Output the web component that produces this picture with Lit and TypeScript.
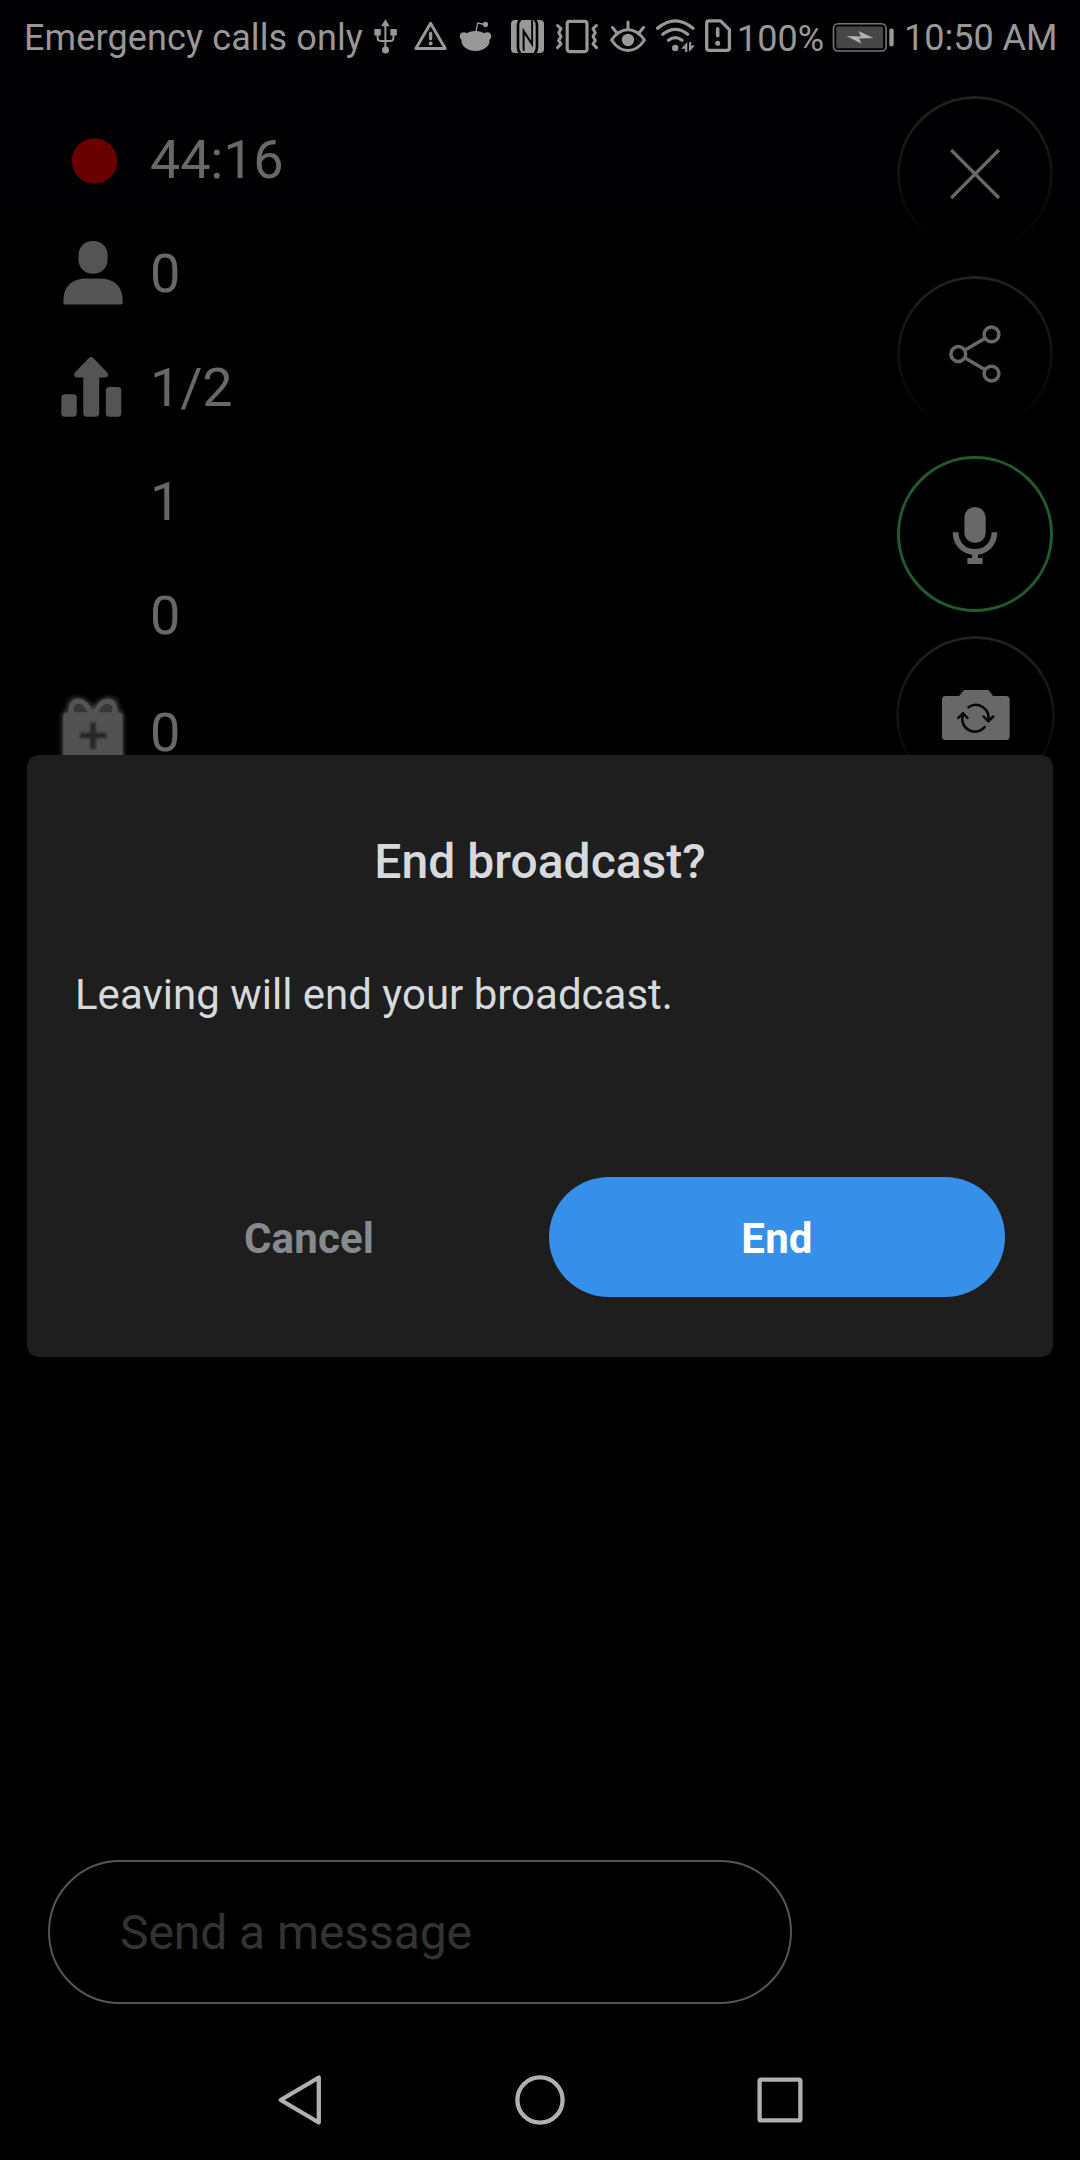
import { LitElement, html, css, svg } from "lit";
import { customElement, property } from "lit/decorators.js";

/* Each glyph owns a view box; the drawing coordinates are screen units. */
const glyphs: Record<string, { box: [number, number, number, number]; art: unknown }> = {
  usb: {
    box: [372, 0, 28, 76],
    art: svg`
      <path d="M385.4 19.3l4.3 7h-8.6z M382 50a3.5 3.5 0 1 0 7 0a3.5 3.5 0 1 0-7 0z M374.4 29h6.4v6.6h-6.4z M390.400 29h6.400v6.600h-6.400z" fill="currentColor"/>
      <path d="M385.4 25v24 M377.6 34v3.5q0 3.6 3.6 3.6h8.6q3.6 0 3.6-3.6V34" fill="none" stroke="currentColor" stroke-width="2"/>`,
  },
  warning: {
    box: [412, 0, 37, 76],
    art: svg`
      <path d="M430.6 23.3L445.2 48.4H415.9z" fill="none" stroke="currentColor" stroke-width="3" stroke-linejoin="round"/>
      <path d="M430.6 33.4v5.4" stroke="currentColor" stroke-width="3.4" stroke-linecap="round"/>
      <circle cx="430.6" cy="43.6" r="2" fill="currentColor"/>`,
  },
  reddit: {
    box: [458, 0, 35, 76],
    art: svg`
      <ellipse cx="475.5" cy="41" rx="14" ry="10" fill="currentColor"/>
      <circle cx="463.8" cy="36.3" r="4" fill="currentColor"/>
      <circle cx="487.2" cy="36.3" r="4" fill="currentColor"/>
      <circle cx="485.5" cy="24.4" r="2.6" fill="currentColor"/>
      <path d="M476 32l1.7-9 7 1.5" fill="none" stroke="currentColor" stroke-width="1.3"/>`,
  },
  nfc: {
    box: [510, 0, 35, 76],
    art: svg`
      <rect x="511" y="20" width="33" height="33" rx="4" fill="currentColor"/>
      <g fill="none" stroke="#010002">
        <path d="M520.500 19.500Q518 21.500 518 26V47Q518 51.500 520.500 53.500" stroke-width="2.600"/>
        <path d="M534.500 19.500Q537 21.500 537 26V47Q537 51.500 534.500 53.500" stroke-width="2.600"/>
      </g>
      <path d="M522.600 27.500L531.200 41V20H533V47.500L524.600 34.500V51.500L522.600 50z" fill="#010002"/>`,
  },
  vibrate: {
    box: [555, 0, 44, 76],
    art: svg`
      <rect x="567.2" y="21.400" width="19.800" height="30.200" rx="2.500" fill="none" stroke="currentColor" stroke-width="3.200"/>
      <path d="M557.5 25.500l3.500 3.200-2.300 4 2.300 3.700-2.300 4 2.300 3.600-3.500 3.600M596.500 25.500l-3.500 3.200 2.300 4-2.300 3.700 2.300 4-2.300 3.600 3.500 3.600" fill="none" stroke="currentColor" stroke-width="3" stroke-linejoin="round" stroke-linecap="round"/>`,
  },
  eye: {
    box: [609, 0, 39, 76],
    art: svg`
      <path d="M611.5 40Q618.500 29.700 628 29.700T644.500 40Q637.500 50.500 628 50.500T611.500 40z" fill="none" stroke="currentColor" stroke-width="3" stroke-linejoin="round"/>
      <circle cx="628" cy="40" r="6.200" fill="currentColor"/>
      <path d="M628 22v7M612.500 27.500l4.500 5.500M643.500 27.500l-4.500 5.500" stroke="currentColor" stroke-width="3" stroke-linecap="round"/>`,
  },
  wifi: {
    box: [655, 0, 42, 76],
    art: svg`
      <g fill="none" stroke="currentColor" stroke-width="3.300" stroke-linecap="round">
        <path d="M657.500 28.300Q675.300 13.500 693 28.300M662.800 34.300Q675.300 24.500 687.700 34.300M668.500 40.300Q675.300 35 682 40.300"/>
      </g>
      <circle cx="675.200" cy="48" r="3.200" fill="currentColor"/>
      <path d="M687.300 42v10h-2.200v-3.200h-4zM689 52V42h2v3.500h4z" fill="currentColor"/>`,
  },
  sim: {
    box: [704, 0, 28, 76],
    art: svg`
      <path d="M709 20.800H720.500L729.400 29.700V48Q729.400 50.300 727 50.300H709Q706.700 50.300 706.700 48V23Q706.700 20.800 709 20.800z" fill="none" stroke="currentColor" stroke-width="3.300" stroke-linejoin="round"/>
      <path d="M717.700 28.800v7" stroke="currentColor" stroke-width="3.600" stroke-linecap="round"/>
      <circle cx="717.700" cy="43.200" r="2.500" fill="currentColor"/>`,
  },
  battery: {
    box: [832, 0, 63, 76],
    art: svg`
      <rect x="833.500" y="23.800" width="52.600" height="27.200" rx="4.500" fill="none" stroke="#777" stroke-width="1.600"/>
      <rect x="836.300" y="26.500" width="46.800" height="21.800" rx="1.500" fill="#464646"/>
      <path d="M846.500 36L861 36.500 858.500 31 873.500 38 859 38.500 861.500 43.700z" fill="#b4b4b4"/>
      <rect x="889.300" y="28.600" width="4.400" height="18" rx="2" fill="currentColor"/>`,
  },
  record: { box: [56, 102, 76, 114], art: svg`<circle cx="94.500" cy="161" r="22.800" fill="#680000"/>` },
  person: {
    box: [56, 216, 76, 114],
    art: svg`
      <path d="M78.500 255.500C78.500 246.500 84.500 241 93 241S107.600 246.500 107.600 255.500V259.500C107.600 268 101.500 273.700 93 273.700S78.500 268 78.500 259.500z" fill="#545454"/>
      <path d="M63.300 302Q63.300 278.500 87 278.500H99Q122.800 278.500 122.800 302Q122.800 304.600 120 304.600H66Q63.300 304.600 63.300 302z" fill="#545454"/>`,
  },
  ranking: {
    box: [56, 330, 76, 114],
    art: svg`
      <g fill="#545454">
        <rect x="61.300" y="394.200" width="15.500" height="22.600" rx="3.500"/>
        <rect x="105.800" y="387" width="15.500" height="29.800" rx="3.500"/>
        <path d="M88.800 358Q91 356 93.200 358L107.500 372.700Q109 375 107.500 376.500Q107 377.600 104.500 377.600H99.200V413.300Q99.200 416.800 95.700 416.800H86.800Q83.300 416.800 83.300 413.300V377.600H77.500Q75 377.600 74.800 376.500Q73.500 375 74.800 372.700z"/>
      </g>`,
  },
  gift: {
    box: [50, 675, 88, 114],
    art: svg`
      <defs>
        <filter id="halo" x="-30%" y="-30%" width="160%" height="160%"><feGaussianBlur stdDeviation="2.600"/></filter>
        <filter id="soft" filterUnits="userSpaceOnUse" x="70" y="715" width="46" height="42"><feGaussianBlur stdDeviation="0.9"/></filter>
      </defs>
      <g filter="url(#halo)" fill="#555" opacity=".9">
        <rect x="62.300" y="711.500" width="61" height="60" rx="4"/>
        <path d="M68 714Q65 697.500 78 697.500Q86 697.500 93 708Q100 697.500 108 697.500Q121 697.500 118 714z"/>
      </g>
      <g fill="#373737" stroke="#545454" stroke-width="5" stroke-linejoin="round">
        <path d="M72.500 715C69 707 73 701.300 79 701.300C85 701.300 87 707 92.500 715z"/>
        <path d="M113.500 715C117 707 113 701.300 107 701.300C101 701.300 99 707 93.500 715z"/>
      </g>
      <rect x="63.300" y="712.600" width="59.200" height="58" rx="4" fill="#525252"/>
      <path d="M93 722.500v26.500M80 735.600h26.500" stroke="#262626" stroke-width="5.500" filter="url(#soft)"/>`,
  },
  close: {
    box: [897, 96, 156, 156],
    art: svg`<path d="M951.200 150L999 198M999 150L951.200 198" stroke="currentColor" stroke-width="3.200"/>`,
  },
  share: {
    box: [897, 276, 156, 156],
    art: svg`
      <g fill="none" stroke="currentColor" stroke-width="3.500">
        <circle cx="958.300" cy="354" r="7.400"/><circle cx="991.500" cy="334.400" r="7.400"/><circle cx="991.500" cy="373.600" r="7.400"/>
        <path d="M964.700 350.200L985.100 338.200M964.700 357.800L985.100 369.800"/>
      </g>`,
  },
  mic: {
    box: [897, 456, 156, 156],
    art: svg`
      <rect x="964.400" y="507" width="21.300" height="36" rx="10.600" fill="currentColor"/>
      <path d="M955.600 532.300C955.600 544 964 552 975 552S994.400 544 994.400 532.300" fill="none" stroke="currentColor" stroke-width="5.800"/>
      <path d="M972 553h6v5h4.600v6h-15.200v-6h4.600z" fill="currentColor"/>`,
  },
  camera: {
    box: [896, 636, 159, 159],
    art: svg`
      <path d="M945.500 696H959L963 691.200Q964 690 965.500 690H987Q988.500 690 989.500 691.200L993 696H1006Q1009.700 696 1009.700 699.500V736.500Q1009.700 740 1006 740H945.500Q942 740 942 736.500V699.500Q942 696 945.500 696z" fill="currentColor"/>
      <g fill="none" stroke="#050505" stroke-width="2.500" stroke-linecap="round" stroke-linejoin="round">
        <path d="M968.500 707.300A12.700 12.700 0 0 1 988.300 720M983.600 716.500L988.300 721.300 993.300 716.500"/>
        <path d="M984.700 727A12.700 12.700 0 0 1 963 714.500M958.300 718L963 713.200 967.500 718"/>
      </g>`,
  },
  back: {
    box: [270, 2064, 60, 72],
    art: svg`<path d="M318.800 2077.500V2122.500L280.700 2100z" fill="none" stroke="currentColor" stroke-width="4.300" stroke-linejoin="round"/>`,
  },
  home: {
    box: [510, 2064, 60, 72],
    art: svg`<circle cx="540" cy="2100" r="22.600" fill="none" stroke="currentColor" stroke-width="4.300"/>`,
  },
  recents: {
    box: [750, 2064, 60, 72],
    art: svg`<rect x="759.600" y="2079.600" width="40.800" height="40.800" rx="1.500" fill="none" stroke="currentColor" stroke-width="4.300"/>`,
  },
};

@customElement("ui-glyph")
class UiGlyph extends LitElement {
  static styles = css`
    :host { display: block; flex: none; }
    .art { display: block; }
  `;
  @property() name = "";
  render() {
    const g = glyphs[this.name];
    return g
      ? html`<svg class="art" width=${g.box[2]} height=${g.box[3]} viewBox=${g.box.join(" ")}>${g.art}</svg>`
      : null;
  }
}

@customElement("status-bar")
class StatusBar extends LitElement {
  static styles = css`
    :host {
      display: flex; align-items: flex-start; height: 76px; padding: 0 0 0 24px; box-sizing: border-box;
      color: #989898; font-size: 36px; line-height: 76px; white-space: nowrap;
    }
    .network { flex: none; width: 348px; letter-spacing: 0.12px; }
    .warning { margin-left: 12px; }
    .reddit { margin-left: 9px; }
    .nfc { margin-left: 17px; }
    .vibrate { margin-left: 10px; }
    .eye { margin-left: 10px; }
    .wifi { margin-left: 7px; }
    .sim { margin-left: 7px; }
    .level { flex: none; width: 95px; margin-left: 5px; padding-top: 1px; }
    .clock { margin-left: 9px; }
  `;
  render() {
    return html`
      <span class="network">Emergency calls only</span>
      <ui-glyph name="usb"></ui-glyph>
      ${["warning", "reddit", "nfc", "vibrate", "eye", "wifi", "sim"].map(
        (n) => html`<ui-glyph class=${n} name=${n}></ui-glyph>`,
      )}
      <span class="level">100%</span>
      <ui-glyph name="battery"></ui-glyph>
      <span class="clock">10:50 AM</span>
    `;
  }
}

@customElement("confirm-dialog")
class ConfirmDialog extends LitElement {
  static styles = css`
    :host {
      display: flex; flex-direction: column; box-sizing: border-box; height: 602px;
      padding: 77px 48px 60px; border-radius: 12px; background: #1e1e1e; color: #d7dadc;
    }
    .title { margin: 0; font-size: 48px; line-height: 60px; font-weight: 500; text-align: center; }
    .text { margin: 78px 0 0; font-size: 42px; line-height: 50px; }
    .actions { display: grid; grid-template-columns: 468px 456px; gap: 6px; margin-top: auto; }
    .action {
      height: 120px; padding: 3px 0 0; border: 0; border-radius: 60px; background: none;
      font: 700 42px/50px Roboto, sans-serif; letter-spacing: 0.15px; color: #878a8c;
    }
    .primary { background: #368fe9; color: #fff; }
  `;
  render() {
    return html`
      <h1 class="title">End broadcast?</h1>
      <p class="text">Leaving will end your broadcast.</p>
      <div class="actions">
        <button class="action">Cancel</button>
        <button class="action primary">End</button>
      </div>
    `;
  }
}

@customElement("app-root")
class AppRoot extends LitElement {
  static styles = css`
    :host {
      display: flex; flex-direction: column; position: relative; width: 1080px; height: 2160px;
      overflow: hidden; background: linear-gradient(#010002, #000 800px); font-family: Roboto, sans-serif;
    }
    .stage { flex: 1; display: flex; justify-content: space-between; align-items: flex-start; }
    .stats { display: flex; flex-direction: column; padding: 26px 0 0 50px; }
    .stat { display: grid; grid-template-columns: 100px auto; height: 114px; color: #686868; font-size: 54px; line-height: 114px; }
    .value { line-height: 115px; letter-spacing: -0.2px; }
    .late { padding-top: 3px; }
    .icon { padding-left: 6px; }
    .icon.gift { padding-left: 0; }
    .tools { display: flex; flex-direction: column; gap: 24px; align-items: flex-start; padding: 20px 25px 0 0; }
    .tool {
      position: relative; width: 156px; height: 156px; margin-left: 1px; padding: 0; border: 0; border-radius: 50%;
      background: none; color: #686868;
    }
    .tool::before {
      content: ""; position: absolute; inset: 0; border-radius: 50%; border: 3px solid #222; box-sizing: border-box;
      mask-image: linear-gradient(#000, transparent);
    }
    .tool.mic::before { border-color: #205c2b; mask-image: none; }
    .tool.camera { width: 159px; height: 159px; margin-left: 0; }
    .composer { padding: 0 48px; }
    .message {
      display: flex; align-items: center; box-sizing: border-box; width: 744px; height: 144px;
      border: 2px solid #555; border-radius: 72px; padding: 1px 0 0 70px; color: #333; font-size: 48px;
      letter-spacing: -0.08px;
    }
    .nav { display: flex; justify-content: center; gap: 180px; padding: 60px 0 24px; color: #b1b1b1; }
    .dialog { position: absolute; left: 27px; right: 27px; top: 755px; }
  `;

  private stats = [
    { icon: "record", value: "44:16" },
    { icon: "person", value: "0" },
    { icon: "ranking", value: "1/2" },
    { icon: "", value: "1" },
    { icon: "", value: "0" },
    { icon: "gift", value: "0" },
  ];

  render() {
    return html`
      <status-bar></status-bar>
      <main class="stage">
        <div class="stats">
          ${this.stats.map(
            (s) => html`<div class="stat ${s.icon === "gift" ? "late" : ""}">
              <ui-glyph class="icon ${s.icon}" name=${s.icon}></ui-glyph>
              <span class="value">${s.value}</span>
            </div>`,
          )}
        </div>
        <div class="tools">
          ${["close", "share", "mic", "camera"].map(
            (n) => html`<button class="tool ${n}" aria-label=${n}><ui-glyph name=${n}></ui-glyph></button>`,
          )}
        </div>
      </main>
      <div class="composer"><div class="message">Send a message</div></div>
      <nav class="nav">
        <ui-glyph name="back"></ui-glyph>
        <ui-glyph name="home"></ui-glyph>
        <ui-glyph name="recents"></ui-glyph>
      </nav>
      <confirm-dialog class="dialog"></confirm-dialog>
    `;
  }
}
